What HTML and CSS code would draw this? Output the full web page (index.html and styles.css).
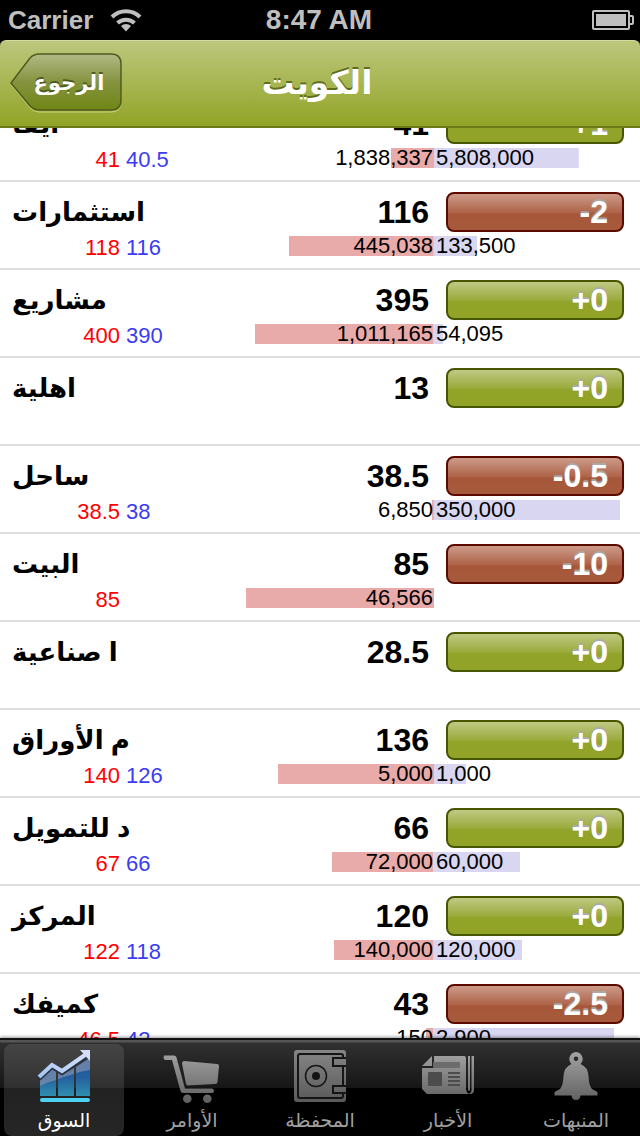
FILE: index.html
```html
<!DOCTYPE html>
<html lang="ar" dir="ltr">
<head>
<meta charset="utf-8">
<meta name="viewport" content="width=device-width, initial-scale=1">
<title>الكويت</title>
<link rel="stylesheet" href="styles.css">
</head>
<body>
<div class="statusbar">
  <div class="carrier"><span>Carrier</span>
    <svg class="wifi" width="32" height="24" viewBox="0 0 32 24" aria-hidden="true"><g fill="none" stroke="#bfbfbf" stroke-width="4"><path d="M2 9a20 20 0 0 1 28 0"/><path d="M7.500 15a12.500 12.500 0 0 1 17 0"/></g><path d="M16 23.500l-5-5.500a7 7 0 0 1 10 0z" fill="#bfbfbf"/></svg>
  </div>
  <div class="clock">8:47 AM</div>
  <svg class="battery" width="42" height="20" viewBox="0 0 42 20" aria-hidden="true"><rect x="1" y="1" width="36" height="18" rx="1" fill="none" stroke="#bfbfbf" stroke-width="2"/><rect x="4" y="4" width="30" height="12" fill="#bfbfbf"/><path d="M38 6h2q1 0 1 1v6q0 1-1 1h-2" fill="none" stroke="#bfbfbf" stroke-width="2"/></svg>
</div>

<header class="navbar">
  <button class="back" type="button">
    <svg class="back-shape" viewBox="0 0 112 60" preserveAspectRatio="none" aria-hidden="true">
      <defs><linearGradient id="backFill" x1="0" y1="0" x2="0" y2="1"><stop offset="0" stop-color="#b2b986"/><stop offset=".5" stop-color="#85933f"/><stop offset="1" stop-color="#6f8614"/></linearGradient></defs>
      <path d="M1 31L20 6Q24 2 29 2H101Q111 2 111 12V49Q111 59 101 59H29Q24 59 20 55Z" fill="none" stroke="#c9d27c" stroke-width="1"/>
      <path d="M1 30L20 5Q24 1 29 1H101Q111 1 111 11V47Q111 57 101 57H29Q24 57 20 53Z" fill="url(#backFill)" stroke="#4f5b1d" stroke-width="1.500"/>
    </svg>
    <span>الرجوع</span>
  </button>
  <h1>الكويت</h1>
</header>

<main class="list-view">
<ul class="stocks">
  <li><span class="name">ايفا</span><span class="price">41</span><button type="button" class="change up">+1</button><span class="ask">41</span><span class="bid">40.5</span><span class="ask-vol" style="--share:23%">1,838,337</span><span class="bid-vol" style="--share:77%">5,808,000</span></li>
  <li><span class="name">استثمارات</span><span class="price">116</span><button type="button" class="change down">-2</button><span class="ask">118</span><span class="bid">116</span><span class="ask-vol" style="--share:77%">445,038</span><span class="bid-vol" style="--share:23%">133,500</span></li>
  <li><span class="name">مشاريع</span><span class="price">395</span><button type="button" class="change up">+0</button><span class="ask">400</span><span class="bid">390</span><span class="ask-vol" style="--share:95%">1,011,165</span><span class="bid-vol" style="--share:5%">54,095</span></li>
  <li><span class="name">اهلية</span><span class="price">13</span><button type="button" class="change up">+0</button></li>
  <li><span class="name">ساحل</span><span class="price">38.5</span><button type="button" class="change down">-0.5</button><span class="ask">38.5</span><span class="bid">38</span><span class="ask-vol" style="--share:1%">6,850</span><span class="bid-vol" style="--share:99%">350,000</span></li>
  <li><span class="name">البيت</span><span class="price">85</span><button type="button" class="change down">-10</button><span class="ask">85</span><span class="ask-vol" style="--share:100%">46,566</span></li>
  <li><span class="name">ا صناعية</span><span class="price">28.5</span><button type="button" class="change up">+0</button></li>
  <li><span class="name">م الأوراق</span><span class="price">136</span><button type="button" class="change up">+0</button><span class="ask">140</span><span class="bid">126</span><span class="ask-vol" style="--share:83%">5,000</span><span class="bid-vol" style="--share:17%">1,000</span></li>
  <li><span class="name">د للتمويل</span><span class="price">66</span><button type="button" class="change up">+0</button><span class="ask">67</span><span class="bid">66</span><span class="ask-vol" style="--share:54%">72,000</span><span class="bid-vol" style="--share:46%">60,000</span></li>
  <li><span class="name">المركز</span><span class="price">120</span><button type="button" class="change up">+0</button><span class="ask">122</span><span class="bid">118</span><span class="ask-vol" style="--share:53%">140,000</span><span class="bid-vol" style="--share:47%">120,000</span></li>
  <li><span class="name">كميفك</span><span class="price">43</span><button type="button" class="change down">-2.5</button><span class="ask">46.5</span><span class="bid">42</span><span class="ask-vol" style="--share:4%">150</span><span class="bid-vol" style="--share:96%">2,900</span></li>
</ul>
</main>

<nav class="tabbar">
  <button type="button" class="tab selected" aria-current="page">
    <svg width="60" height="60" viewBox="0 0 60 60" aria-hidden="true">
      <defs>
        <linearGradient id="bars" x1="0" y1="12" x2="0" y2="50" gradientUnits="userSpaceOnUse"><stop offset="0" stop-color="#2458a0"/><stop offset=".5" stop-color="#235f9f"/><stop offset="1" stop-color="#2f8fae"/></linearGradient>
        <linearGradient id="trend" x1="0" y1="1" x2="1" y2="0"><stop offset="0" stop-color="#a5c7f4"/><stop offset="1" stop-color="#d3e0fb"/></linearGradient>
        <linearGradient id="grey" x1="0" y1="4" x2="0" y2="56" gradientUnits="userSpaceOnUse"><stop offset="0" stop-color="#a6a6a6"/><stop offset="1" stop-color="#5f5f5f"/></linearGradient>
        <linearGradient id="safe" x1="0" y1="4" x2="0" y2="56" gradientUnits="userSpaceOnUse"><stop offset="0" stop-color="#858585"/><stop offset="1" stop-color="#5a5a5a"/></linearGradient>
      </defs>
      <path d="M6 34L18 23L22 25V50H6ZM24 27L28 29L40 22V50H24ZM42 21L56 12V50H42Z" fill="url(#bars)"/>
      <path d="M6 34L18 23L22 25V34Q14 36 6 40ZM24 27L28 29L40 22V28Q32 30 24 33ZM42 21L56 12V24Q49 25 42 27Z" fill="#8290ad" opacity=".7"/>
      <path d="M5 33L18 21L28 27L51 11" fill="none" stroke="#26303f" stroke-width="4"/>
      <path d="M5 31L18 19L28 25L51 9" fill="none" stroke="url(#trend)" stroke-width="4"/>
      <path d="M46 4H56V15Z" fill="#d3e0fb"/>
      <rect x="6" y="52" width="50" height="4" rx="2" fill="#4fd0f0"/>
    </svg>
    <span>السوق</span>
  </button>
  <button type="button" class="tab">
    <svg width="60" height="60" viewBox="0 0 60 60" aria-hidden="true">
      <path d="M2 9.500H12Q14 9.500 14.500 11.500L23 42.500H50Q52 43 52 45Q52 47 50 47H21Q19 47 18.500 45L10 14H3Q1 13 2 9.500Z" fill="url(#grey)"/>
      <path d="M22 15L55 18Q57 18 57 20L55.500 36Q55.300 38 53 38L26 39.500Q24.500 39.500 24 38L20 17.500Q20 15 22 15Z" fill="url(#grey)"/>
      <circle cx="25.300" cy="52.700" r="4.300" fill="url(#grey)"/><circle cx="45.300" cy="52.700" r="4.300" fill="url(#grey)"/>
    </svg>
    <span>الأوامر</span>
  </button>
  <button type="button" class="tab">
    <svg width="60" height="60" viewBox="0 0 60 60" aria-hidden="true">
      <rect x="4" y="4" width="52" height="52" rx="3" fill="url(#safe)"/>
      <path d="M53 12V9.500Q53 8 51 8H10Q8 8 8 10V50Q8 52 10 52H51Q53 52 53 50V47H43V40H53V20H43V12H56M53 20H56M53 40H56M53 47H56" fill="none" stroke="#151515" stroke-width="2"/>
      <circle cx="26" cy="30" r="10.500" fill="none" stroke="#151515" stroke-width="1.500"/><circle cx="26" cy="30" r="4" fill="#151515"/>
    </svg>
    <span>المحفظة</span>
  </button>
  <button type="button" class="tab">
    <svg width="60" height="60" viewBox="0 0 60 60" aria-hidden="true">
      <path d="M16 10H46Q48 10 48 12V43Q48 46 51 48H9L4 43V22H16ZM4 20L14 10V20ZM50 10H52V44Q51 46 50 44ZM53.500 10H56V44Q56 48 52 48L50 47Q53.500 48 53.500 43Z" fill="url(#grey)"/>
      <rect x="15" y="16" width="27" height="6" rx="1" fill="#6c6c6c"/><rect x="10" y="26" width="14" height="14" rx="1" fill="#4c4c4c"/>
      <path d="M30 27H42M30 31H42M30 35H42M30 39H42" stroke="#4c4c4c" stroke-width="2"/>
    </svg>
    <span>الأخبار</span>
  </button>
  <button type="button" class="tab">
    <svg width="60" height="60" viewBox="0 0 60 60" aria-hidden="true">
      <path fill-rule="evenodd" d="M30 6A7 7 0 0 1 34.500 18Q42 21 42.500 30Q43 40 46 43L51.500 46V49.500H34.500Q34 54 30 54Q26 54 25.500 49.500H8.500V46L14 43Q17 40 17.500 30Q18 21 25.500 18A7 7 0 0 1 30 6ZM30 10.500A2.200 2.200 0 1 0 30 15A2.200 2.200 0 1 0 30 10.500Z" fill="url(#grey)"/>
    </svg>
    <span>المنبهات</span>
  </button>
</nav>
</body>
</html>
```
FILE: styles.css
```css
* {
  box-sizing: border-box;
}

body {
  margin: 0;
  height: 100vh;
  display: flex;
  flex-direction: column;
  overflow: hidden;
  background: #000;
  font-family: "Liberation Sans", "DejaVu Sans", sans-serif;
}

button {
  border: 0;
  padding: 0;
  background: none;
  font: inherit;
  color: inherit;
}

.statusbar {
  height: 40px;
  flex: none;
  display: grid;
  grid-template-columns: 1fr auto 1fr;
  align-items: center;
  padding: 0 6px 0 8px;
  color: #bfbfbf;
  font-size: 26px;
  font-weight: bold;
}

.carrier {
  display: flex;
  align-items: center;
  gap: 17px;
}

.clock {
  padding-right: 4px;
  font-size: 28px;
}

.battery {
  justify-self: end;
}

.navbar {
  flex: none;
  height: 88px;
  display: grid;
  grid-template-columns: 112px 1fr 112px;
  align-items: center;
  padding: 0 16px 2px 10px;
  border-radius: 6px 6px 0 0;
  border-top: 1px solid #d3dba0;
  border-bottom: 2px solid #6f7d19;
  background: linear-gradient(#bcc77d, #92a426);
  color: #fff;
}

.navbar h1 {
  margin: 0;
  text-align: center;
  font-size: 33px;
  line-height: 60px;
  text-shadow: 0 -2px 0 #5f6c1c;
}

.back {
  position: relative;
  height: 60px;
  padding-left: 6px;
  font-size: 21px;
  font-weight: bold;
  line-height: 60px;
  text-shadow: 0 -2px 0 #4f5b1d;
}

.back span {
  position: relative;
}

.back-shape {
  position: absolute;
  inset: 0;
  width: 100%;
  height: 100%;
}

.list-view {
  flex: 1;
  min-height: 0;
  overflow: hidden;
  background: #fff;
}

/* The list is scrolled part of the way through its first row. */
.stocks {
  list-style: none;
  margin: -34px 0 0;
  padding: 0;
}

.stocks li {
  height: 88px;
  display: grid;
  grid-template-columns: 120px 1fr 188px 12px 178px;
  grid-template-rows: 40px 20px;
  row-gap: 4px;
  padding: 10px 16px 0 0;
  border-bottom: 2px solid #dedede;
  color: #000;
  font-size: 22px;
  line-height: 20px;
}

.name {
  grid-area: 1 / 1 / 2 / 3;
  padding-left: 12px;
  text-align: left;
  font-size: 26px;
  font-weight: bold;
  line-height: 40px;
}

.price {
  grid-area: 1 / 3;
  padding-right: 5px;
  text-align: right;
  font-size: 32px;
  font-weight: bold;
  line-height: 40px;
}

.change {
  grid-area: 1 / 5;
  padding-right: 14px;
  border: 2px solid;
  border-radius: 8px;
  color: #fff;
  text-align: right;
  font-size: 32px;
  font-weight: bold;
  line-height: 36px;
  text-shadow: 0 -2px 1px #aaa;
}

.up {
  border-color: #485600;
  background: linear-gradient(#c0c984, #9bab3b 50%, #92a329 56%, #92a428);
}

.down {
  border-color: #5b0a00;
  background: linear-gradient(#cc9b8a, #b0654b 50%, #a6573a 56%, #a85a3c);
}

.ask {
  grid-area: 2 / 1;
  text-align: right;
  line-height: 24px;
  color: #f00;
}

.bid {
  grid-area: 2 / 2;
  padding-left: 6px;
  line-height: 24px;
  color: #3c3cf0;
}

.ask-vol,
.bid-vol {
  background-repeat: no-repeat;
  background-size: var(--share) 100%;
}

.ask-vol {
  grid-area: 2 / 3;
  padding-right: 1px;
  text-align: right;
  background-image: linear-gradient(#e9aaaa, #e9aaaa);
  background-position: right;
}

.bid-vol {
  grid-area: 2 / 4 / 3 / 6;
  width: 188px;
  padding-left: 2px;
  background-image: linear-gradient(#d8d6f0, #d8d6f0);
}

.tabbar {
  position: relative;
  flex: none;
  height: 98px;
  display: grid;
  grid-template-columns: repeat(5, 1fr);
  padding: 4px 0;
  border-top: 2px solid #111;
  background: linear-gradient(#555 0, #555 2px, #303030 3px, #161616 48px, #000 48px);
  box-shadow: 0 -1px 3px rgba(0, 0, 0, .4);
  color: #a0a0a0;
}

.tab {
  display: flex;
  flex-direction: column;
  align-items: center;
  margin: 0 4px;
  padding-top: 2px;
  border-radius: 8px;
  font-size: 19px;
  line-height: 30px;
}

.tab svg {
  flex: none;
}

.selected {
  background: linear-gradient(#454545, #303030 44px, #222 44px, #262626);
  color: #fff;
}
```
